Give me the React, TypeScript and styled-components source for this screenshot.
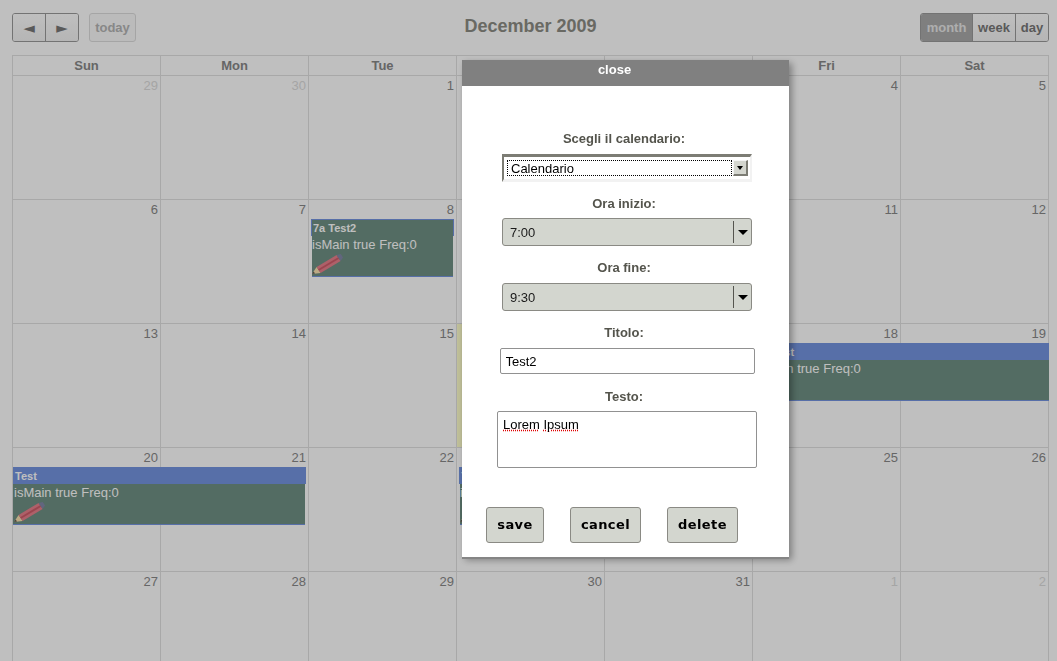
import React, { FC } from 'react';
import styled, { createGlobalStyle } from 'styled-components';

const GlobalStyle = createGlobalStyle`
  html, body {
    margin: 0;
    height: 100%;
    overflow: hidden;
    background: #ffffff;
    font-family: "Liberation Sans", Arial, sans-serif;
  }
`;

const Calendar = styled.div`
  padding: 13px 8px 0 12px;
`;

const Toolbar = styled.div`
  display: grid;
  grid-template-columns: 1fr auto 1fr;
  align-items: center;
  height: 29px;
  margin-bottom: 13px;
`;

const ToolGroup = styled.div<{ $end?: boolean }>`
  display: flex;
  gap: 10px;
  justify-content: ${p => (p.$end ? 'flex-end' : 'flex-start')};
`;

const ButtonSet = styled.div`
  display: flex;
  height: 29px;
  border: 1px solid #9a9a9a;
  border-radius: 3px;
  overflow: hidden;
  box-sizing: border-box;
`;

const ToolButton = styled.div<{ $width: number; $active?: boolean }>`
  width: ${p => p.$width}px;
  display: flex;
  align-items: center;
  justify-content: center;
  font-size: 13px;
  font-weight: 700;
  color: ${p => (p.$active ? '#e8e8e8' : '#777777')};
  background: ${p => (p.$active ? '#aaaaaa' : 'linear-gradient(#ffffff, #f2f2f2)')};
  & + & {
    border-left: 1px solid #9a9a9a;
  }
`;

const ArrowGlyph = styled.span`
  font-family: "DejaVu Sans", sans-serif;
  font-size: 15px;
  font-weight: 400;
`;

const TodayButton = styled.div`
  width: 47px;
  height: 29px;
  box-sizing: border-box;
  border: 1px solid #dddddd;
  border-radius: 3px;
  display: flex;
  align-items: center;
  justify-content: center;
  font-size: 13px;
  font-weight: 700;
  color: #b5b5b5;
  background: #fafafa;
`;

const Title = styled.h2`
  margin: 0 0 2px;
  font-size: 18px;
  font-weight: 700;
  color: #8c8c84;
`;

const Grid = styled.div`
  width: 1037px;
  border-top: 1px solid #e0e0e0;
  border-left: 1px solid #e0e0e0;
  box-sizing: border-box;
`;

const HeadRow = styled.div`
  display: grid;
  grid-template-columns: repeat(7, 148px);
  height: 20px;
`;

const HeadCell = styled.div`
  display: flex;
  align-items: center;
  justify-content: center;
  box-sizing: border-box;
  border-right: 1px solid #e0e0e0;
  border-bottom: 1px solid #e0e0e0;
  font-size: 13px;
  font-weight: 700;
  color: #888888;
`;

const Week = styled.div`
  display: grid;
  grid-template-columns: repeat(7, 148px);
  grid-template-rows: 124px;
`;

const Day = styled.div<{ $col: number; $today?: boolean; $muted?: boolean }>`
  grid-row: 1;
  grid-column: ${p => p.$col};
  box-sizing: border-box;
  border-right: 1px solid #e0e0e0;
  border-bottom: 1px solid #e0e0e0;
  padding: 2px 2px 0 0;
  text-align: right;
  font-size: 13px;
  line-height: 15px;
  color: ${p => (p.$muted ? '#dcdcdc' : '#888888')};
  background: ${p => (p.$today ? '#ffffcc' : 'transparent')};
`;

const EventBox = styled.div<{ $from: number; $to: number; $left: number; $right: number }>`
  grid-row: 1;
  grid-column: ${p => p.$from} / ${p => p.$to};
  align-self: start;
  margin: 19px ${p => p.$right}px 0 ${p => p.$left}px;
  height: 58px;
  z-index: 1;
  color: #ffffff;
`;

const EventHead = styled.div<{ $outlined?: boolean }>`
  box-sizing: border-box;
  height: 17px;
  padding-left: 1px;
  border: 1px solid #7595e0;
  border-bottom: 0;
  background: ${p => (p.$outlined ? '#6f9084' : '#7595e0')};
  font-size: 11px;
  font-weight: 700;
  line-height: 16px;
  white-space: nowrap;
  overflow: hidden;
`;

const EventBody = styled.div<{ $flushLeft?: boolean; $flushRight?: boolean }>`
  box-sizing: border-box;
  margin-left: ${p => (p.$flushLeft ? 0 : 1)}px;
  margin-right: ${p => (p.$flushRight ? 0 : 1)}px;
  padding-left: ${p => (p.$flushLeft ? 1 : 0)}px;
  height: 41px;
  background: #6f9084;
  border-bottom: 1px solid #7595e0;
  font-size: 13px;
  line-height: 17px;
  white-space: nowrap;
  overflow: hidden;
`;

const Pencil = styled.svg`
  display: block;
  margin-top: 1px;
`;

const PencilIcon: FC = () => (
  <Pencil width="32" height="21" viewBox="0 0 32 21">
    <path d="M0 20 L4.6 12.9 L8.6 19.1 Z" fill="#fbe2b0" />
    <path d="M0 20 L1.7 17.6 L3 19.4 Z" fill="#55524c" />
    <path d="M4.6 12.9 L24.6 0.9 L28.6 7.1 L8.6 19.1 Z" fill="#e8808c" />
    <path d="M6.6 16 L26.6 4" stroke="#cf5c6a" strokeWidth="2" fill="none" />
    <path d="M24.6 0.9 L28.8 0 L31 3.6 L28.6 7.1 Z" fill="#8288a8" />
  </Pencil>
);

const Overlay = styled.div`
  position: fixed;
  inset: 0;
  z-index: 5;
  background: rgba(0, 0, 0, 0.25);
`;

const Dialog = styled.div`
  position: fixed;
  z-index: 6;
  left: 462px;
  top: 60px;
  width: 327px;
  height: 497px;
  background: #ffffff;
  box-shadow: 0 2px 0 #858585, 3px 3px 7px rgba(0, 0, 0, 0.35);
`;

const CloseBar = styled.div`
  height: 26px;
  padding-right: 22px;
  box-sizing: border-box;
  background: #808080;
  color: #ffffff;
  font-size: 13px;
  font-weight: 700;
  line-height: 19px;
  text-align: center;
`;

const Form = styled.form`
  display: flex;
  flex-direction: column;
  align-items: center;
  padding: 45px 0 0 3px;
`;

const FieldLabel = styled.label<{ $gap: number }>`
  display: block;
  margin: ${p => p.$gap}px 6px 0 0;
  height: 16px;
  font-size: 13px;
  font-weight: 700;
  line-height: 16px;
  color: #54544c;
`;

const SunkenSelect = styled.div`
  margin-top: 7px;
  box-sizing: border-box;
  width: 250px;
  height: 28px;
  display: flex;
  align-items: stretch;
  padding: 3px 2px 3px 3px;
  border-top: 3px solid #7c7c74;
  border-left: 2px solid #7c7c74;
  border-right: 2px solid #f2f2f2;
  border-bottom: 3px solid #f2f2f2;
  background: #ffffff;
`;

const FocusedValue = styled.div`
  flex: 1;
  outline: 1px dotted #000000;
  outline-offset: -1px;
  padding-left: 4px;
  font-size: 13px;
  line-height: 17px;
  color: #000000;
`;

const SmallArrow = styled.div`
  width: 15px;
  margin-left: 1px;
  box-sizing: border-box;
  display: flex;
  align-items: center;
  justify-content: center;
  background: #d4d6cf;
  border-right: 2px solid #7c7c74;
  border-bottom: 2px solid #7c7c74;
  border-top: 1px solid #f4f4f4;
  border-left: 1px solid #f4f4f4;
  &::after {
    content: '';
    border-top: 4px solid #000000;
    border-left: 3px solid transparent;
    border-right: 3px solid transparent;
  }
`;

const FlatSelect = styled.div<{ $gap: number }>`
  margin-top: ${p => p.$gap}px;
  box-sizing: border-box;
  width: 250px;
  height: 28px;
  display: flex;
  align-items: center;
  border: 1px solid #8a8a84;
  border-radius: 3px;
  background: #d3d6cf;
  font-size: 13px;
  color: #1a1a1a;
`;

const FlatValue = styled.div`
  flex: 1;
  padding-left: 7px;
`;

const FlatArrow = styled.div`
  width: 17px;
  height: 22px;
  border-left: 1px solid #55554f;
  display: flex;
  align-items: center;
  justify-content: center;
  &::after {
    content: '';
    border-top: 5px solid #000000;
    border-left: 5px solid transparent;
    border-right: 5px solid transparent;
  }
`;

const TextField = styled.input`
  margin-top: 7px;
  box-sizing: border-box;
  width: 255px;
  height: 26px;
  padding: 0 5px;
  border: 1px solid #919191;
  border-radius: 2px;
  background: #ffffff;
  font-family: "Liberation Sans", Arial, sans-serif;
  font-size: 13px;
  color: #000000;
  outline: none;
`;

const TextArea = styled.div`
  margin-top: 6px;
  box-sizing: border-box;
  width: 260px;
  height: 57px;
  padding: 5px;
  border: 1px solid #919191;
  border-radius: 2px;
  font-size: 13px;
  line-height: 16px;
  color: #000000;
`;

const Misspelled = styled.span`
  text-decoration: underline dotted #e00000;
`;

const Actions = styled.div`
  display: flex;
  align-self: flex-start;
  margin: 39px 0 0 21px;
`;

const ActionButton = styled.button<{ $width: number; $gap: number }>`
  width: ${p => p.$width}px;
  height: 36px;
  margin-right: ${p => p.$gap}px;
  padding: 0 0 2px;
  border: 1px solid #8a8a84;
  border-radius: 3px;
  background: #d3d6cf;
  font-family: "DejaVu Sans", sans-serif;
  font-size: 13px;
  font-weight: 700;
  letter-spacing: 0.4px;
  color: #000000;
`;

// Wed and Thu sit behind the dialog down to the last row, so their labels stay empty there
const headers = ['Sun', 'Mon', 'Tue', '', '', 'Fri', 'Sat'];

const weeks: { day?: number; muted?: boolean }[][] = [
  [{ day: 29, muted: true }, { day: 30, muted: true }, { day: 1 }, {}, {}, { day: 4 }, { day: 5 }],
  [{ day: 6 }, { day: 7 }, { day: 8 }, {}, {}, { day: 11 }, { day: 12 }],
  [{ day: 13 }, { day: 14 }, { day: 15 }, {}, {}, { day: 18 }, { day: 19 }],
  [{ day: 20 }, { day: 21 }, { day: 22 }, {}, {}, { day: 25 }, { day: 26 }],
  [{ day: 27 }, { day: 28 }, { day: 29 }, { day: 30 }, { day: 31 }, { day: 1, muted: true }, { day: 2, muted: true }],
];

type CalEvent = {
  week: number;
  from: number;
  to: number;
  title: string;
  left: number;
  right: number;
  outlined?: boolean;
  flushLeft?: boolean;
  flushRight?: boolean;
};

const events: CalEvent[] = [
  { week: 1, from: 3, to: 4, title: '7a Test2', left: 2, right: 3, outlined: true },
  { week: 2, from: 6, to: 8, title: '7a Test', left: 2, right: 0, flushRight: true },
  { week: 3, from: 1, to: 3, title: 'Test', left: 0, right: 3, flushLeft: true },
  { week: 3, from: 4, to: 5, title: '7a Test', left: 2, right: 3 },
];

const App: FC = () => (
  <>
    <GlobalStyle />
    <Calendar>
      <Toolbar>
        <ToolGroup>
          <ButtonSet>
            <ToolButton $width={32}><ArrowGlyph>◄</ArrowGlyph></ToolButton>
            <ToolButton $width={32}><ArrowGlyph>►</ArrowGlyph></ToolButton>
          </ButtonSet>
          <TodayButton>today</TodayButton>
        </ToolGroup>
        <Title>December 2009</Title>
        <ToolGroup $end>
          <ButtonSet>
            <ToolButton $width={51} $active>month</ToolButton>
            <ToolButton $width={42}>week</ToolButton>
            <ToolButton $width={32}>day</ToolButton>
          </ButtonSet>
        </ToolGroup>
      </Toolbar>
      <Grid>
        <HeadRow>
          {headers.map((h, i) => <HeadCell key={i}>{h}</HeadCell>)}
        </HeadRow>
        {weeks.map((week, w) => (
          <Week key={w}>
            {week.map((d, i) => (
              <Day key={i} $col={i + 1} $muted={d.muted} $today={w === 2 && i === 3}>{d.day}</Day>
            ))}
            {events.filter(e => e.week === w).map(e => (
              <EventBox key={e.from} $from={e.from} $to={e.to} $left={e.left} $right={e.right}>
                <EventHead $outlined={e.outlined}>{e.title}</EventHead>
                <EventBody $flushLeft={e.flushLeft} $flushRight={e.flushRight}>
                  isMain true Freq:0
                  <PencilIcon />
                </EventBody>
              </EventBox>
            ))}
          </Week>
        ))}
      </Grid>
    </Calendar>
    <Overlay />
    <Dialog>
      <CloseBar>close</CloseBar>
      <Form>
        <FieldLabel $gap={0}>Scegli il calendario:</FieldLabel>
        <SunkenSelect>
          <FocusedValue>Calendario</FocusedValue>
          <SmallArrow />
        </SunkenSelect>
        <FieldLabel $gap={14}>Ora inizio:</FieldLabel>
        <FlatSelect $gap={6}>
          <FlatValue>7:00</FlatValue>
          <FlatArrow />
        </FlatSelect>
        <FieldLabel $gap={14}>Ora fine:</FieldLabel>
        <FlatSelect $gap={7}>
          <FlatValue>9:30</FlatValue>
          <FlatArrow />
        </FlatSelect>
        <FieldLabel $gap={14}>Titolo:</FieldLabel>
        <TextField defaultValue="Test2" />
        <FieldLabel $gap={15}>Testo:</FieldLabel>
        <TextArea>
          <Misspelled>Lorem</Misspelled> <Misspelled>Ipsum</Misspelled>
        </TextArea>
        <Actions>
          <ActionButton type="button" $width={58} $gap={26}>save</ActionButton>
          <ActionButton type="button" $width={71} $gap={26}>cancel</ActionButton>
          <ActionButton type="button" $width={71} $gap={0}>delete</ActionButton>
        </Actions>
      </Form>
    </Dialog>
  </>
);

export default App;
